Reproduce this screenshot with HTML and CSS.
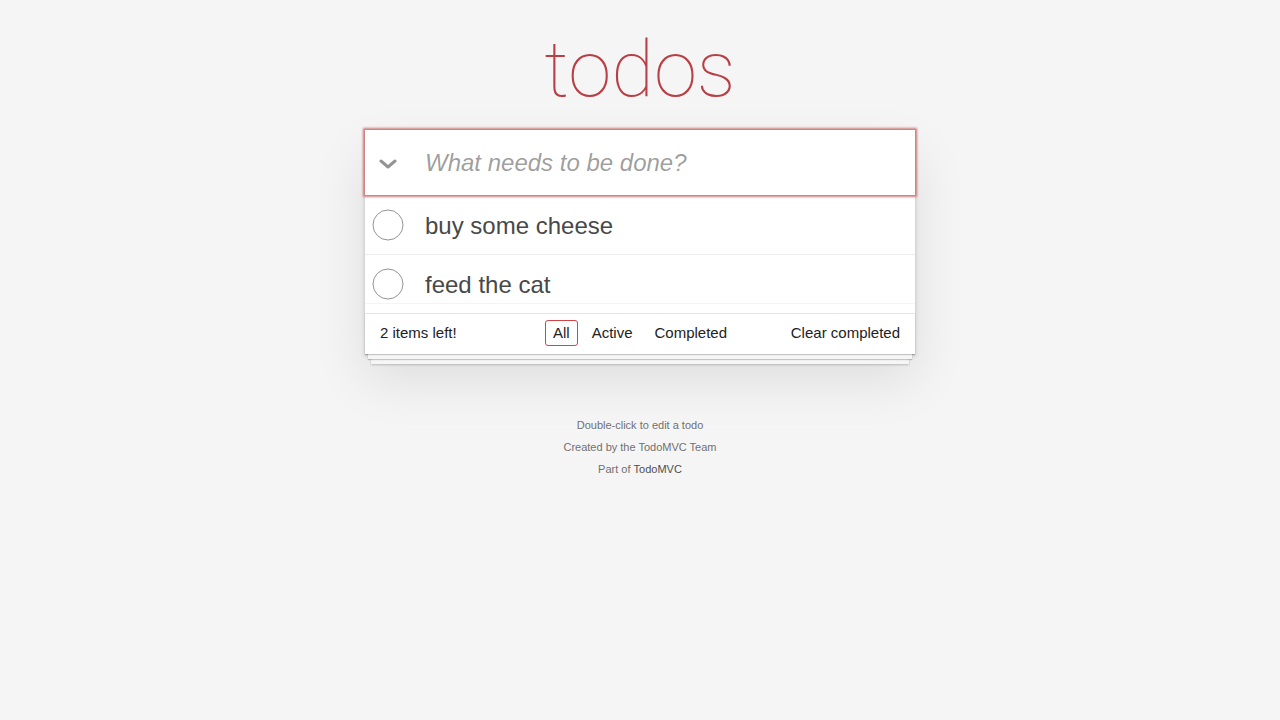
FILE: index.html
```html
<!DOCTYPE html>
<html lang="en">
<head>
<meta charset="utf-8">
<title>TodoMVC</title>
<link rel="stylesheet" href="styles.css">
</head>
<body>
<section class="todoapp-wrap">
  <header class="masthead">
    <h1 class="title">todos</h1>
  </header>
  <div class="todoapp">
    <div class="new-row focused">
      <span class="toggle-all">
        <svg width="18" height="10" viewBox="0 0 18 10"><path d="M2 2 L9 8 L16 2" fill="none" stroke="#949494" stroke-width="3" stroke-linecap="round" stroke-linejoin="round"/></svg>
      </span>
      <input class="new-todo" type="text" placeholder="What needs to be done?">
    </div>
    <ul class="todo-list">
      <li class="todo">
        <span class="toggle"><svg width="32" height="32" viewBox="0 0 32 32"><circle cx="16" cy="16" r="15" fill="none" stroke="#949494" stroke-width="1"/></svg></span>
        <label class="todo-label">buy some cheese</label>
      </li>
      <li class="todo">
        <span class="toggle"><svg width="32" height="32" viewBox="0 0 32 32"><circle cx="16" cy="16" r="15" fill="none" stroke="#949494" stroke-width="1"/></svg></span>
        <label class="todo-label">feed the cat</label>
      </li>
    </ul>
    <footer class="footer">
      <span class="todo-count">2 items left!</span>
      <ul class="filters">
        <li><a class="filter selected" href="#/">All</a></li>
        <li><a class="filter" href="#/active">Active</a></li>
        <li><a class="filter" href="#/completed">Completed</a></li>
      </ul>
      <span class="clear-completed">Clear completed</span>
    </footer>
  </div>
  <footer class="info">
    <p>Double-click to edit a todo</p>
    <p>Created by the TodoMVC Team</p>
    <p>Part of <a class="info-link" href="#">TodoMVC</a></p>
  </footer>
</section>
</body>
</html>
```
FILE: styles.css
```css
html, body {
  margin: 0;
  padding: 0;
}
body {
  background: #f5f5f5;
  color: #111111;
  font-family: "Liberation Sans", Arial, sans-serif;
  font-size: 14px;
  font-weight: 300;
}
.todoapp-wrap {
  width: 550px;
  margin: 0 auto;
}
.masthead {
  height: 130px;
  box-sizing: border-box;
  padding-top: 31px;
}
.title {
  margin: 0;
  font-family: Roboto, "Liberation Sans", sans-serif;
  font-weight: 100;
  font-size: 78px;
  line-height: 78px;
  color: #b83f45;
  text-align: center;
}
.todoapp {
  background: #fff;
  box-shadow: 0 2px 4px 0 rgba(0,0,0,0.2), 0 25px 50px 0 rgba(0,0,0,0.1);
  margin-bottom: 40px;
}
.new-row {
  display: flex;
  align-items: center;
  height: 65px;
  position: relative;
  z-index: 1;
  background: #fff;
}
.new-row.focused {
  box-shadow: 0 0 2px 2px #cf7d7d;
}
.toggle-all {
  width: 46px;
  display: flex;
  justify-content: center;
  align-items: center;
  padding-top: 2px;
}
.new-todo {
  flex: 1;
  min-width: 0;
  height: 65px;
  box-sizing: border-box;
  border: none;
  outline: none;
  background: transparent;
  padding: 16px 16px 16px 14px;
  font-family: "Liberation Sans", Arial, sans-serif;
  font-size: 24px;
  color: #484848;
}
.new-todo::placeholder {
  font-style: italic;
  font-weight: 400;
  color: rgba(0,0,0,0.4);
}
.todo-list {
  list-style: none;
  margin: 0;
  padding: 0;
}
.todo {
  display: flex;
  align-items: center;
  border-bottom: 1px solid #ededed;
  font-size: 24px;
}
.todo:first-child .toggle {
  padding-top: 2px;
}
.todo:last-child {
  border-bottom: none;
  background: linear-gradient(to bottom, transparent 48px, #f4f4f4 48px, #f4f4f4 49px, transparent 49px);
}
.toggle {
  width: 46px;
  display: flex;
  justify-content: center;
  align-items: center;
}
.todo-label {
  padding: 16px 15px 14px 14px;
  line-height: 28.5px;
  font-weight: 400;
  color: #484848;
}
.todo:first-child .todo-label {
  padding-top: 17px;
  padding-bottom: 13px;
}
.footer {
  display: grid;
  grid-template-columns: 1fr auto 1fr;
  align-items: start;
  height: 20px;
  padding: 10px 15px;
  border-top: 1px solid #e6e6e6;
  font-size: 15px;
  line-height: 18px;
  color: #222;
  box-shadow: 0 1px 1px rgba(0,0,0,0.2),
              0 8px 0 -3px #f6f6f6,
              0 9px 1px -3px rgba(0,0,0,0.2),
              0 16px 0 -6px #f6f6f6,
              0 17px 2px -6px rgba(0,0,0,0.2);
}
.todo-count {
  justify-self: start;
}
.filters {
  list-style: none;
  margin: -4px 0 0;
  padding: 0;
  display: flex;
}
.filter {
  display: block;
  margin: 0 3px;
  padding: 3px 7px;
  line-height: 18px;
  color: inherit;
  text-decoration: none;
  border: 1px solid transparent;
  border-radius: 3px;
}
.filter.selected {
  border-color: #ce4646;
}
.clear-completed {
  justify-self: end;
}
.info {
  margin-top: 66px;
  color: #6f6f6f;
  font-size: 11px;
  text-shadow: 0 1px 0 rgba(255,255,255,0.5);
  text-align: center;
}
.info p {
  line-height: 1;
  margin: 0 0 11px;
}
.info-link {
  color: #4d4d4d;
  font-weight: 400;
  text-decoration: none;
}
```
